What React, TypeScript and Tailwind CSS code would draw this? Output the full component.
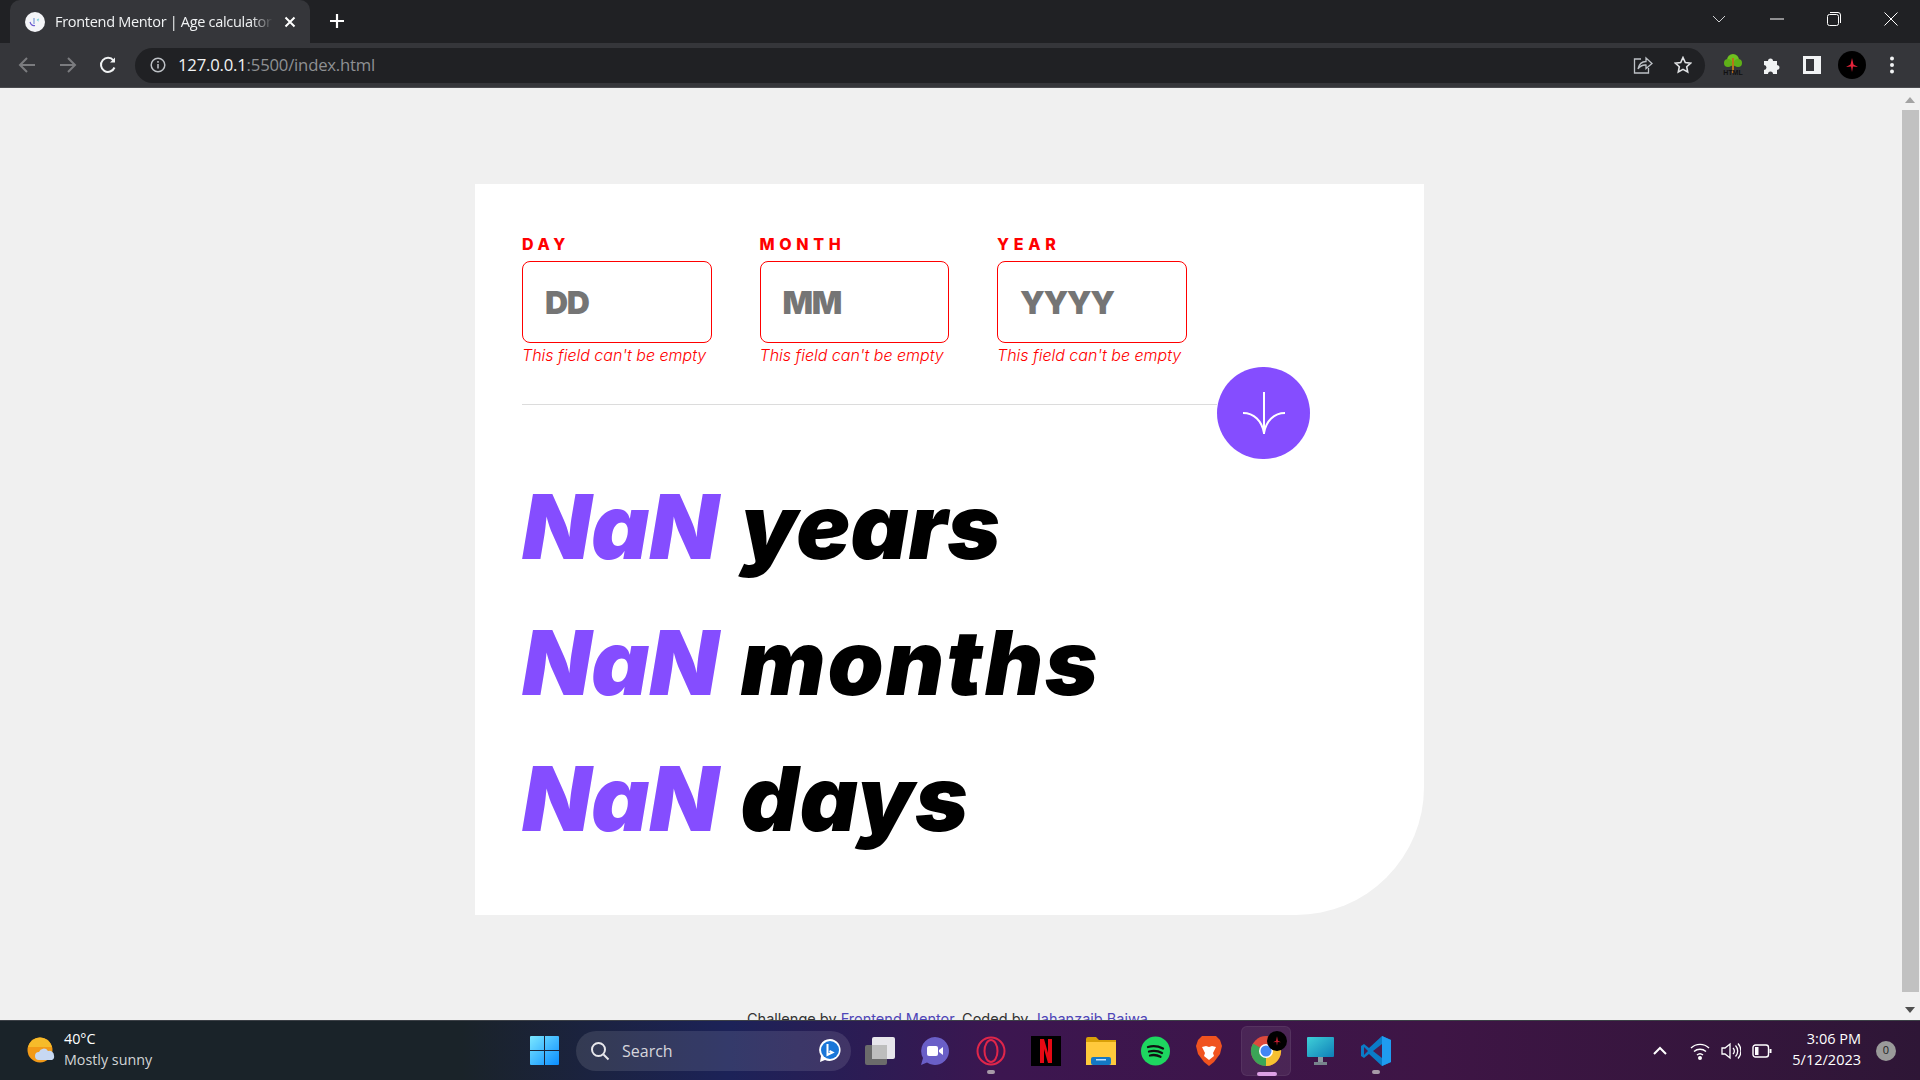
import React from "react";

const Arrow = ({ flip }: { flip?: boolean }) => (
  <svg width="20" height="20" viewBox="0 0 20 20" fill="none" stroke="#7b7c7f" strokeWidth="2" style={flip ? { transform: "scaleX(-1)" } : undefined}>
    <path d="M18 10H3M10 3l-7 7 7 7" />
  </svg>
);

function TopBar() {
  return (
    <div className="h-[43px] bg-[#202124] flex shrink-0 relative">
      <div className="ml-[10px] w-[300px] h-[43px] bg-[#35363a] rounded-t-[10px] flex items-center pl-[15px] pr-[14px]">
        <div className="w-[20px] h-[20px] rounded-full bg-[#f4f5f8] flex items-center justify-center shrink-0">
          <svg width="14" height="14" viewBox="0 0 14 14" fill="none" strokeWidth="1.2">
            <path d="M2 7c1 3 3 4 5 3.500" stroke="#6a5ad0" />
            <path d="M6 3v6" stroke="#7c9ad8" />
            <path d="M9 5l2-1M9 5l2 1" stroke="#7fd0d8" />
          </svg>
        </div>
        <div className="ml-[10px] w-[219px] overflow-hidden whitespace-nowrap text-[14.500px] tracking-[-0.3px] text-[#f1f3f4] font-['Open_Sans',sans-serif] [mask-image:linear-gradient(to_right,black_90%,transparent)]">
          Frontend Mentor | Age calculator app
        </div>
        <svg className="ml-[11px] shrink-0" width="12" height="12" viewBox="0 0 12 12" stroke="#fff" strokeWidth="2"><path d="M1.500 1.500l9 9M10.500 1.500l-9 9" /></svg>
      </div>
      <svg className="ml-[19px] mt-[13px]" width="16" height="16" viewBox="0 0 16 16" stroke="#fff" strokeWidth="2.200"><path d="M8 1v14M1 8h14" /></svg>
      <div className="ml-auto flex items-center h-[38px] text-white">
        <svg width="14" height="8" viewBox="0 0 14 8" fill="none" stroke="#cfd0d2" strokeWidth="1"><path d="M1 1l6 6 6-6" /></svg>
        <svg className="ml-[44px]" width="14" height="2" viewBox="0 0 14 2" stroke="#fff" strokeWidth="1"><path d="M0 1h14" /></svg>
        <svg className="ml-[43px]" width="14" height="14" viewBox="0 0 14 14" fill="none" stroke="#fff" strokeWidth="1"><rect x="0.500" y="2.500" width="11" height="11" rx="2" /><path d="M3 .500h8a2.500 2.500 0 0 1 2.500 2.500v8" /></svg>
        <svg className="ml-[43px] mr-[22px]" width="14" height="14" viewBox="0 0 14 14" stroke="#fff" strokeWidth="1"><path d="M.500.500l13 13M13.500.500l-13 13" /></svg>
      </div>
    </div>
  );
}

function Toolbar() {
  return (
    <div className="h-[45px] bg-[#35363a] flex items-center shrink-0 border-b border-[#4a4b4f]">
      <div className="ml-[17px]"><Arrow /></div>
      <div className="ml-[21px]"><Arrow flip /></div>
      <svg className="ml-[20px]" width="20" height="20" viewBox="0 0 20 20" fill="none" stroke="#f1f3f4" strokeWidth="2"><path d="M16.500 12.500A7 7 0 1 1 15.500 5.500" /><path d="M17 2.500v5h-5z" fill="#f1f3f4" stroke="none" /></svg>
      <div className="ml-[17px] w-[1570px] h-[35px] rounded-full bg-[#202124] flex items-center pl-[15px] pr-[13px]">
        <svg width="16" height="16" viewBox="0 0 16 16" fill="none" stroke="#bdc1c6" strokeWidth="1.500"><circle cx="8" cy="8" r="6.800" /><path d="M8 7v4.500M8 4v1.800" /></svg>
        <div className="ml-[12px] text-[16.700px] tracking-[-0.2px] font-['Open_Sans',sans-serif] text-[#f1f3f4]">127.0.0.1<span className="text-[#8e9093]">:5500/index.html</span></div>
        <svg className="ml-auto" width="20" height="20" viewBox="0 0 20 20" fill="none" stroke="#bdc1c6" strokeWidth="1.300"><path d="M8 4H1.500v14h14v-5" /><path d="M5 14c1-5 4-7.500 8-7.500V3l6 5.500-6 5v-3.500c-3-.2-6 1-8 4z" /></svg>
        <svg className="ml-[21px]" width="18" height="18" viewBox="0 0 18 18" fill="none" stroke="#e0e2e4" strokeWidth="1.600"><path d="M9 1.500l2.300 5 5.300.6-3.900 3.600 1 5.300L9 13.400 4.300 16l1-5.300L1.400 7.100l5.300-.6z" /></svg>
      </div>
      <svg className="ml-[17px]" width="22" height="24" viewBox="0 0 22 24">
        <circle cx="11" cy="7" r="6" fill="#6fc21f" /><circle cx="6" cy="10" r="4" fill="#5fb018" /><circle cx="16" cy="10" r="4" fill="#5fb018" />
        <path d="M11 5v15" stroke="#b8741a" strokeWidth="2" />
        <text x="11" y="22" textAnchor="middle" fontSize="7" fontWeight="700" fontFamily="Liberation Sans, sans-serif" fill="#111">HTML</text>
      </svg>
      <svg className="ml-[19px]" width="18" height="18" viewBox="0 0 18 18" fill="#f1f3f4"><path d="M1 5h4a2.500 2.500 0 0 1 5 0h4v4a2.500 2.500 0 0 1 0 5v4H10a2.500 2.500 0 0 0-5 0H1v-4a2.500 2.500 0 0 0 0-5z" /></svg>
      <svg className="ml-[22px]" width="18" height="18" viewBox="0 0 18 18"><rect width="18" height="18" fill="#f1f3f4" /><rect x="3" y="3" width="8" height="12" fill="#35363a" /></svg>
      <div className="ml-[17px] w-[28px] h-[28px] rounded-full bg-black flex items-center justify-center">
        <svg width="12" height="14" viewBox="0 0 12 14" fill="#e5243b"><path d="M6 0l1.500 6.500L12 9 7 8.500 6 14 5 8.500 0 9l4.500-2.500z" /></svg>
      </div>
      <svg className="ml-[23px]" width="6" height="18" viewBox="0 0 6 18" fill="#f1f3f4"><circle cx="3" cy="2.500" r="2" /><circle cx="3" cy="9" r="2" /><circle cx="3" cy="15.500" r="2" /></svg>
    </div>
  );
}

function Field({ label, ph }: { label: string; ph: string }) {
  return (
    <div className="w-[189.500px] flex flex-col">
      <label className="h-[30px] text-[16px] leading-[26px] font-extrabold tracking-[4.700px] text-[#ff0000] font-['Inter',sans-serif]">{label}</label>
      <input
        placeholder={ph}
        className="w-full h-[82px] border border-[#ff0000] rounded-[8px] pl-[22px] text-[32px] font-black tracking-[-1.400px] font-['Inter',sans-serif] placeholder:text-[#757575] outline-none"
      />
      <p className="mt-[1px] text-[16px] leading-[22px] font-light italic text-[#ff0000] whitespace-nowrap font-['Inter',sans-serif]">This field can't be empty</p>
    </div>
  );
}

function Line({ word, cls }: { word: string; cls: string }) {
  return (
    <p className="h-[136px] text-[90px] leading-[136px] italic font-black font-['Inter',sans-serif] text-black whitespace-nowrap">
      <span className="text-[#854dff]">NaN</span> <span className={cls}>{word}</span>
    </p>
  );
}

function Card() {
  return (
    <div className="ml-[475px] mt-[96px] w-[949px] h-[731px] bg-white rounded-br-[128px] pl-[47px] pt-[47px] shrink-0">
      <div className="flex gap-[48px]">
        <Field label="DAY" ph="DD" />
        <Field label="MONTH" ph="MM" />
        <Field label="YEAR" ph="YYYY" />
      </div>
      <div className="flex w-[788px] mt-[1px] h-[93px]">
        <div className="flex-1 h-px mt-[37px] bg-[#dcdcdc]" />
        <button className="w-[93px] h-[92px] rounded-full bg-[#854dff] flex items-center justify-center">
          <svg width="44" height="44" viewBox="0 0 44 44" fill="none" stroke="#fff" strokeWidth="2">
            <path d="M22 1v42" />
            <path d="M1 22c11 0 19 8 21 20M43 22c-11 0-19 8-21 20" />
          </svg>
        </button>
      </div>
      <div className="mt-[-1px]">
        <Line word="years" cls="ml-[4px]" />
        <Line word="months" cls="ml-[4px] tracking-[2px]" />
        <Line word="days" cls="ml-[4px] tracking-[1px]" />
      </div>
    </div>
  );
}

function Scrollbar() {
  return (
    <div className="w-[20px] shrink-0 bg-[#f1f1f1] flex flex-col items-center">
      <svg className="mt-[9px]" width="10" height="6" viewBox="0 0 10 6" fill="#a3a3a3"><path d="M5 0l5 6H0z" /></svg>
      <div className="mt-[7px] w-[17px] h-[882px] bg-[#c1c1c1]" />
      <svg className="mt-[15px]" width="10" height="6" viewBox="0 0 10 6" fill="#505050"><path d="M5 6L0 0h10z" /></svg>
    </div>
  );
}

function Taskbar() {
  return (
    <div className="h-[60px] shrink-0 flex items-center relative border-t border-[#3c4046] bg-[linear-gradient(90deg,#1a2329_0%,#1a2329_24%,#1c2258_38%,#3c1650_52%,#3e1545_75%,#2e1636_100%)] font-['Open_Sans',sans-serif]">
      <svg className="ml-[27px]" width="28" height="28" viewBox="0 0 28 28">
        <circle cx="13" cy="13" r="12.500" fill="#f29a18" />
        <path d="M13 .500A12.500 12.500 0 0 1 25 10H1A12.500 12.500 0 0 1 13 .500z" fill="#f6bb2a" />
        <path d="M12 23a4 4 0 0 1 0-8 5 5 0 0 1 9-1 4.500 4.500 0 0 1 6 4.500 4 4 0 0 1-2 4.500z" fill="#c7d8f2" />
      </svg>
      <div className="ml-[9px] mb-[3px] w-[120px] text-[14.300px] leading-[21px] flex flex-col">
        <span className="text-white">40°C</span>
        <span className="text-[#d2d4d6] whitespace-nowrap">Mostly sunny</span>
      </div>
      <svg className="ml-[346px]" width="29" height="29" viewBox="0 0 29 29">
        <defs><linearGradient id="w" x1="0" y1="0" x2="1" y2="1"><stop offset="0" stopColor="#7be7ff" /><stop offset="1" stopColor="#0a8dff" /></linearGradient></defs>
        <path d="M0 1a1 1 0 0 1 1-1h13v14H0zM15 0h13a1 1 0 0 1 1 1v13H15zM0 15h14v14H1a1 1 0 0 1-1-1zM15 15h14v13a1 1 0 0 1-1 1H15z" fill="url(#w)" />
      </svg>
      <div className="ml-[17px] w-[275px] h-[40px] rounded-full bg-[#ffffff1c] flex items-center pl-[14px]">
        <svg width="20" height="20" viewBox="0 0 20 20" fill="none" stroke="#e8e8ec" strokeWidth="2"><circle cx="8.500" cy="8.500" r="6.500" /><path d="M13.500 13.500l5 5" /></svg>
        <span className="ml-[12px] text-[16px] text-[#d6d6dc]">Search</span>
        <svg className="ml-auto mr-[9px]" width="24" height="26" viewBox="0 0 24 26">
          <path d="M12 1a11 11 0 1 1-5 21l-5 2 1-6A11 11 0 0 1 12 1z" fill="#fff" />
          <circle cx="12" cy="12" r="9" fill="#1a76d8" />
          <path d="M9.500 6v11l5-2.500-3-1.500" fill="none" stroke="#fff" strokeWidth="2" />
        </svg>
      </div>
      <svg className="ml-[14px]" width="30" height="28" viewBox="0 0 30 28">
        <rect x="0" y="8" width="22" height="20" rx="2" fill="#6b6b6b" />
        <rect x="7" y="0" width="23" height="22" rx="2" fill="#f1f1f3" opacity="0.95" />
        <rect x="7" y="8" width="15" height="14" fill="#bdbdbd" />
      </svg>
      <svg className="ml-[25px]" width="30" height="30" viewBox="0 0 30 30">
        <path d="M15 1a14 14 0 1 1-8 25.500L1 29l2-7A14 14 0 0 1 15 1z" fill="#6a5fc7" />
        <rect x="7" y="10" width="11" height="10" rx="2" fill="#fff" /><path d="M19 14l4-3v8l-4-3z" fill="#fff" />
      </svg>
      <div className="ml-[26px] relative">
        <svg width="30" height="30" viewBox="0 0 30 30" fill="none" stroke="#e0264a" strokeWidth="2"><circle cx="15" cy="15" r="13.500" /><ellipse cx="15" cy="15" rx="6.500" ry="11" /></svg>
        <div className="absolute left-[11px] top-[34px] w-[8px] h-[4px] rounded-full bg-[#a79aa8]" />
      </div>
      <div className="ml-[25px] w-[30px] h-[30px] bg-black flex items-center justify-center">
        <svg width="12" height="24" viewBox="0 0 12 24" fill="#e50914"><path d="M0 0h4l4 14V0h4v24H8L4 10v14H0z" /></svg>
      </div>
      <svg className="ml-[25px]" width="30" height="28" viewBox="0 0 30 28">
        <path d="M0 2a2 2 0 0 1 2-2h8l3 3h17v4H0z" fill="#d9a008" />
        <path d="M0 5h30v23H0z" fill="#ffc93c" />
        <rect x="5" y="20" width="20" height="8" rx="2" fill="#1478c4" />
        <rect x="10" y="22" width="10" height="1.500" fill="#bfe2ff" />
      </svg>
      <svg className="ml-[25px]" width="29" height="30" viewBox="0 0 29 30" fill="none">
        <circle cx="14.500" cy="15" r="14.500" fill="#1ed760" />
        <path d="M7 11c5-1.500 10-1 15 1.500M8 15.500c4-1 9-.8 13 1.500M9 19.500c3-.8 7-.6 10.500 1.200" stroke="#111" strokeWidth="2.300" strokeLinecap="round" />
      </svg>
      <svg className="ml-[26px]" width="26" height="30" viewBox="0 0 26 30">
        <path d="M6 0h14l4 4 2 6-2 8-6 8-5 4-5-4-6-8-2-8 2-6z" fill="#f0531f" />
        <path d="M6 11l4-1 3 1 3-1 4 1-3 6 1 3-5 4-5-4 1-3z" fill="#fff" />
      </svg>
      <div className="ml-[19px] w-[50px] h-[50px] rounded-[6px] bg-[#ffffff12] border border-[#ffffff10] flex items-center justify-center relative">
        <svg width="32" height="32" viewBox="0 0 32 32">
          <circle cx="16" cy="16" r="15" fill="#dd4a3c" />
          <path d="M16 16L29 8.500A15 15 0 0 1 16 31z" fill="#f6c131" />
          <path d="M16 16L16 31A15 15 0 0 1 3 8.500z" fill="#3ba557" />
          <circle cx="16" cy="16" r="7" fill="#fff" /><circle cx="16" cy="16" r="5.500" fill="#4286f5" />
        </svg>
        <div className="absolute left-[25px] top-[4px] w-[20px] h-[20px] rounded-full bg-black flex items-center justify-center">
          <svg width="8" height="10" viewBox="0 0 12 14" fill="#c41e30"><path d="M6 0l1.500 6.500L12 9 7 8.500 6 14 5 8.500 0 9l4.500-2.500z" /></svg>
        </div>
        <div className="absolute left-[15px] top-[45px] w-[20px] h-[4px] rounded-full bg-[#dda0e6]" />
      </div>
      <svg className="ml-[16px]" width="27" height="28" viewBox="0 0 27 28">
        <defs><linearGradient id="m" x1="0" y1="0" x2="1" y2="1"><stop offset="0" stopColor="#3fd0d8" /><stop offset="1" stopColor="#0f7fb8" /></linearGradient></defs>
        <rect width="27" height="20" rx="1" fill="url(#m)" /><rect x="11" y="20" width="5" height="5" fill="#8b98a0" /><rect x="7" y="25" width="13" height="3" fill="#77848c" />
      </svg>
      <div className="ml-[27px] relative">
        <svg width="30" height="30" viewBox="0 0 30 30">
          <path d="M21 0l9 4v22l-9 4L8 18l-5 4-3-2v-10l3-2 5 4z" fill="#0a7cc8" />
          <path d="M21 0l9 4v22l-9 4z" fill="#1f9cf0" />
          <path d="M21 8v14l-9-7z" fill="#4a1c50" />
          <path d="M3 11l4 4-4 4z" fill="#4a1c50" />
        </svg>
        <div className="absolute left-[11px] top-[34px] w-[8px] h-[4px] rounded-full bg-[#a79aa8]" />
      </div>
      <svg className="ml-[262px]" width="14" height="9" viewBox="0 0 14 9" fill="none" stroke="#fff" strokeWidth="2"><path d="M1 8l6-6 6 6" /></svg>
      <svg className="ml-[23px]" width="20" height="18" viewBox="0 0 20 18" fill="none" stroke="#fff" strokeWidth="1.400"><path d="M1 6a13 13 0 0 1 18 0M4 9.500a9 9 0 0 1 12 0M7 13a4.500 4.500 0 0 1 6 0" /><circle cx="10" cy="16" r="1.300" fill="#fff" /></svg>
      <svg className="ml-[11px]" width="20" height="18" viewBox="0 0 20 18" fill="none" stroke="#fff" strokeWidth="1.300"><path d="M1 6h3l5-4v14l-5-4H1z" /><path d="M12 6a4 4 0 0 1 0 6M14.500 3.500a8 8 0 0 1 0 11M17 1.500a11 11 0 0 1 0 15" /></svg>
      <svg className="ml-[11px]" width="20" height="14" viewBox="0 0 20 14" fill="none" stroke="#fff" strokeWidth="1.400"><rect x="1" y="1" width="15.500" height="12" rx="2.500" /><rect x="3" y="3" width="3.500" height="8" fill="#fff" stroke="none" /><path d="M18.500 5v4" strokeWidth="2" /></svg>
      <div className="ml-[9px] mb-[3px] w-[80px] text-right text-[14.500px] leading-[21px] text-white whitespace-nowrap flex flex-col">
        <span>3:06 PM</span>
        <span>5/12/2023</span>
      </div>
      <div className="ml-[15px] w-[20px] h-[20px] rounded-full bg-[#9a9a9a] flex items-center justify-center text-[11px] text-[#222]">0</div>
    </div>
  );
}

export default function App() {
  return (
    <div className="w-[1920px] h-[1080px] overflow-hidden flex flex-col">
      <TopBar />
      <Toolbar />
      <div className="flex-1 min-h-0 flex bg-[#f0f0f0]">
        <div className="flex-1 min-w-0 flex flex-col overflow-hidden">
          <Card />
          <p className="mt-[94px] text-center text-[14.500px] leading-[20px] text-[#333] font-['Inter',sans-serif] shrink-0 pr-[4px] ml-[-1px]">
            Challenge by <a className="text-[#4f46b8]">Frontend Mentor</a>. Coded by <a className="text-[#4f46b8]">Jahanzaib Bajwa</a>
          </p>
        </div>
        <Scrollbar />
      </div>
      <Taskbar />
    </div>
  );
}
